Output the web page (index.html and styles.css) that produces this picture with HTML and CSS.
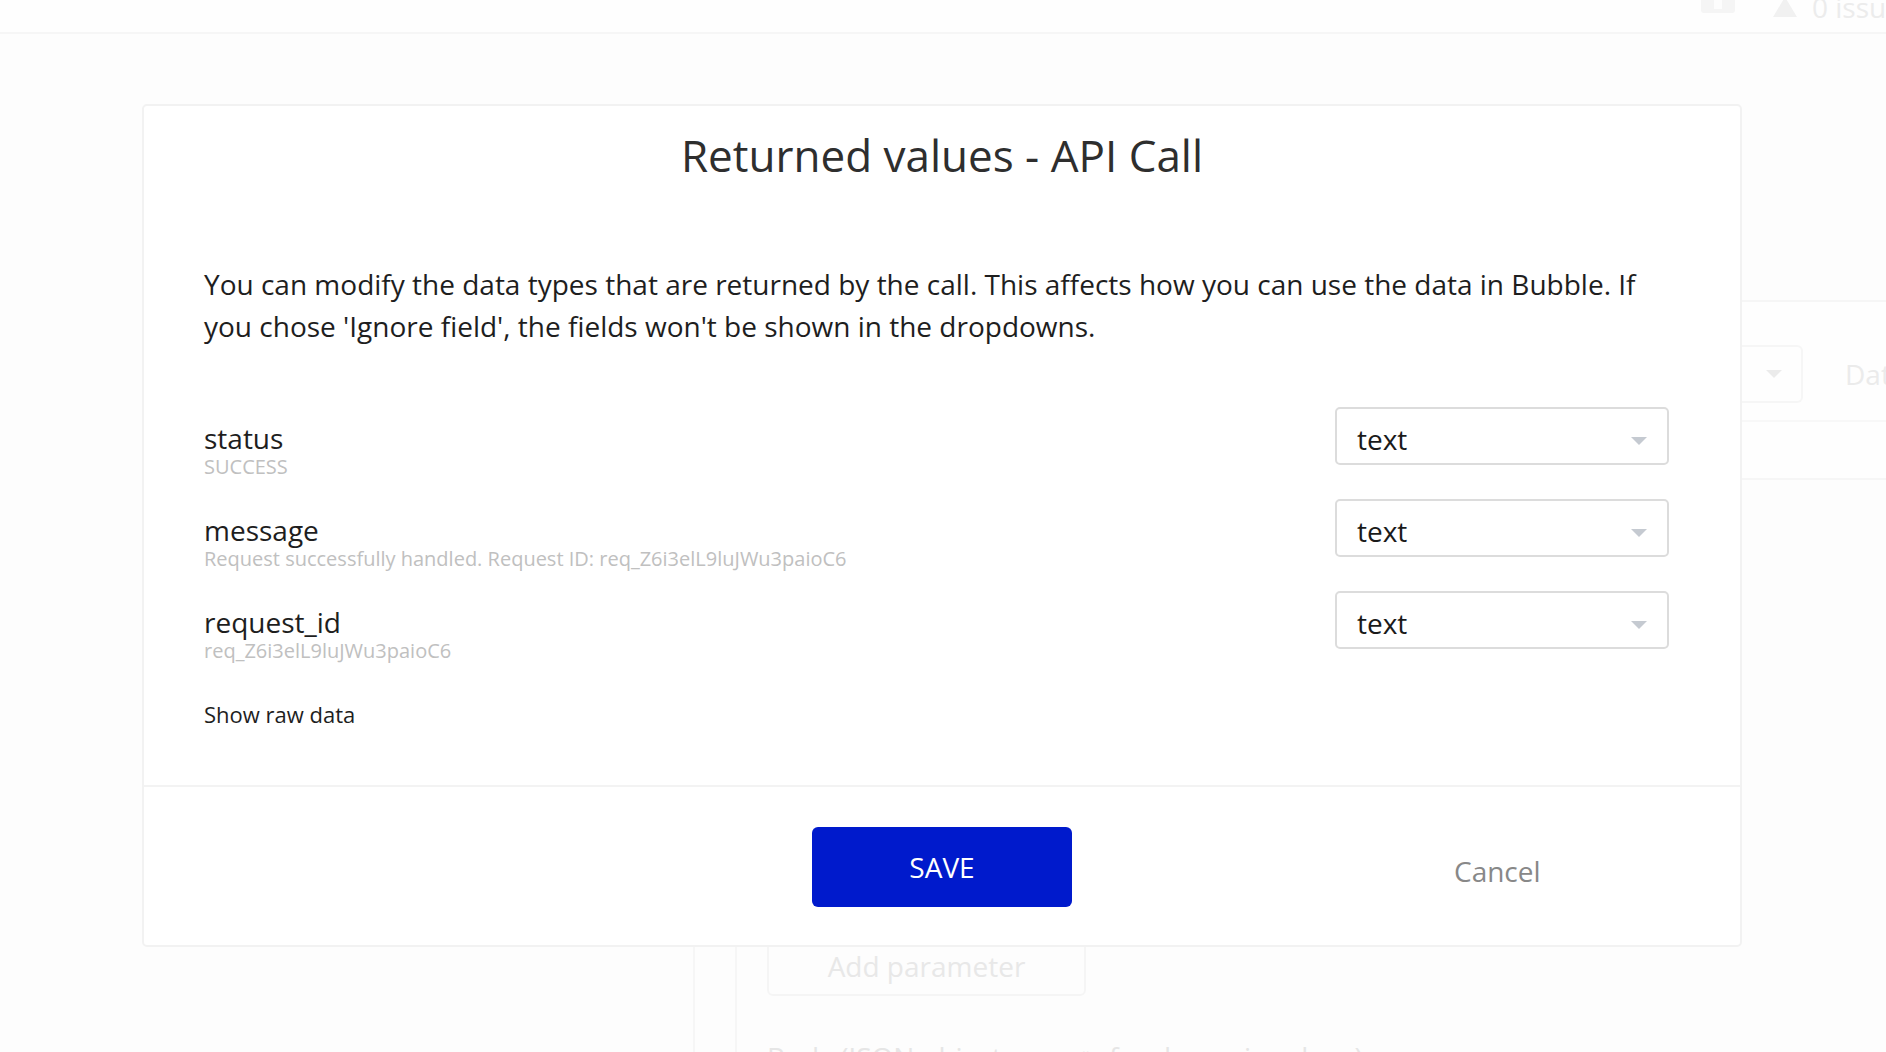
FILE: index.html
```html
<!DOCTYPE html>
<html lang="en">
<head>
<meta charset="utf-8">
<title>Returned values - API Call</title>
<link rel="stylesheet" href="styles.css">
</head>
<body>
<div class="editor">
  <header class="topbar">
    <div class="tb-box"><span class="tb-box-inner"></span></div>
    <svg class="tb-warn" width="24" height="20" viewBox="0 0 24 20"><path d="M12 0 L24 20 L0 20 Z" fill="#f1f1f1"/></svg>
    <span class="tb-issues">0 issues</span>
  </header>
  <div class="canvas">
    <div class="gutter"></div>
    <div class="col1"></div>
    <div class="col2">
      <div class="addparam">Add parameter</div>
      <div class="bodytext">Body (JSON object, use &lt;&gt; for dynamic values)</div>
    </div>
    <div class="rpanel">
      <div class="rp-row">
        <div class="rp-drop"><span class="rp-arrow"></span></div>
        <span class="rp-label">Data type</span>
      </div>
      <div class="rp-line"></div>
    </div>
  </div>
</div>

<div class="modal">
  <h1 class="modal-title">Returned values - API Call</h1>
  <div class="modal-body">
    <p class="intro">You can modify the data types that are returned by the call. This affects how you can use the data in Bubble. If you chose 'Ignore field', the fields won't be shown in the dropdowns.</p>
    <div class="fields">
      <div class="field-row">
        <div class="field-info">
          <div class="field-name">status</div>
          <div class="field-value">SUCCESS</div>
        </div>
        <div class="select"><span class="select-text">text</span><span class="caret"></span></div>
      </div>
      <div class="field-row">
        <div class="field-info">
          <div class="field-name">message</div>
          <div class="field-value">Request successfully handled. Request ID: req_Z6i3elL9luJWu3paioC6</div>
        </div>
        <div class="select"><span class="select-text">text</span><span class="caret"></span></div>
      </div>
      <div class="field-row">
        <div class="field-info">
          <div class="field-name">request_id</div>
          <div class="field-value">req_Z6i3elL9luJWu3paioC6</div>
        </div>
        <div class="select"><span class="select-text">text</span><span class="caret"></span></div>
      </div>
    </div>
    <div class="raw-link">Show raw data</div>
  </div>
  <div class="modal-footer">
    <div></div>
    <button class="btn-save">SAVE</button>
    <div class="cancel-cell"><span class="btn-cancel">Cancel</span></div>
  </div>
</div>
</body>
</html>
```

FILE: styles.css
```css
* { box-sizing: border-box; }

html, body {
  margin: 0;
  padding: 0;
}

body {
  width: 1886px;
  height: 1052px;
  overflow: hidden;
  background: #fdfdfd;
  font-family: "Open Sans", "Liberation Sans", sans-serif;
  position: relative;
}

/* ---------- faded editor behind the modal ---------- */
.editor {
  height: 1052px;
  overflow: hidden;
}

.topbar {
  height: 34px;
  background: #fefefe;
  border-bottom: 2px solid #f6f6f6;
  display: flex;
  align-items: flex-start;
  overflow: hidden;
  padding-left: 1701px;
  white-space: nowrap;
}

.topbar > * { flex: none; }

.tb-box {
  width: 34px;
  height: 24px;
  margin-top: -11px;
  background: #f5f5f5;
  border-radius: 3px;
  display: flex;
  justify-content: center;
  align-items: flex-end;
  padding-bottom: 4px;
}

.tb-box-inner {
  width: 8px;
  height: 10px;
  background: #fdfdfd;
}

.tb-warn {
  margin-left: 38px;
  margin-top: -3px;
}

.tb-issues {
  margin-left: 15px;
  margin-top: -12px;
  font-size: 28px;
  line-height: 38px;
  color: #ececec;
}

.canvas {
  display: flex;
  align-items: flex-start;
  height: 1018px;
}

.canvas > * { flex: none; }

.gutter {
  width: 693px;
}

.col1 {
  width: 42px;
  margin-top: 600px;
  height: 418px;
  border-left: 2px solid #f6f6f6;
}

.col2 {
  width: 1006px;
  margin-top: 600px;
  height: 418px;
  border-left: 2px solid #f6f6f6;
  display: flex;
  flex-direction: column;
}

.col2 > * { flex: none; }

.rpanel {
  width: 145px;
  margin-top: 266px;
  height: 180px;
  border-top: 2px solid #f6f6f6;
  border-bottom: 2px solid #f6f6f6;
  background: #fefefe;
}

.rp-row {
  display: flex;
  align-items: center;
  margin-top: 43px;
  white-space: nowrap;
}

.rp-drop {
  width: 62px;
  height: 58px;
  flex: none;
  border: 2px solid #f6f6f6;
  border-left: none;
  border-radius: 0 6px 6px 0;
  display: flex;
  align-items: center;
  padding-left: 25px;
}

.rp-arrow {
  width: 0;
  height: 0;
  border-left: 8px solid transparent;
  border-right: 8px solid transparent;
  border-top: 8px solid #ebebeb;
}

.rp-label {
  margin-left: 42px;
  font-size: 28px;
  color: #ebebeb;
}

.rp-line {
  margin-top: 17px;
  border-top: 2px solid #f8f8f8;
}

.addparam {
  margin-left: 30px;
  margin-top: 302px;
  width: 319px;
  height: 60px;
  border: 2px solid #f5f5f5;
  border-radius: 6px;
  padding-top: 9px;
  text-align: center;
  font-size: 28px;
  line-height: 38px;
  color: #e8e8e8;
  background: #fdfdfd;
}

.bodytext {
  margin-left: 30px;
  margin-top: 42px;
  font-size: 28px;
  line-height: 38px;
  color: #e6e6e6;
  white-space: nowrap;
}

/* ---------- modal ---------- */
.modal {
  position: absolute;
  top: 104px;
  left: 142px;
  width: 1600px;
  background: #ffffff;
  border: 2px solid #f2f2f2;
  border-radius: 5px;
}

.modal-title {
  margin: 0;
  padding-top: 19px;
  font-size: 44px;
  line-height: 60px;
  font-weight: 400;
  text-align: center;
  color: #2e2e2e;
}

.modal-body {
  padding: 0 71px 56px 60px;
}

.intro {
  margin: 78px 0 0 0;
  font-size: 28px;
  line-height: 42px;
  color: #1e1e1e;
  max-width: 1460px;
}

.fields {
  margin-top: 60px;
  display: flex;
  flex-direction: column;
  gap: 20px;
}

.field-row {
  display: flex;
  justify-content: space-between;
  align-items: flex-start;
  height: 72px;
}

.field-info {
  padding-top: 15px;
}

.field-name {
  font-size: 28px;
  line-height: 32px;
  color: #1e1e1e;
}

.field-value {
  font-size: 20px;
  line-height: 25px;
  color: #c0c0c0;
  white-space: nowrap;
}

.select {
  width: 334px;
  height: 58px;
  border: 2px solid #dcdcdc;
  border-radius: 5px;
  display: flex;
  align-items: flex-start;
  justify-content: space-between;
  padding: 5px 20px 0 20px;
}

.select-text {
  font-size: 28px;
  line-height: 50px;
  color: #1a1a1a;
}

.caret {
  width: 0;
  height: 0;
  margin-top: 23px;
  border-left: 8px solid transparent;
  border-right: 8px solid transparent;
  border-top: 8px solid #c5cad1;
}

.raw-link {
  margin-top: 36px;
  font-size: 22px;
  line-height: 30px;
  color: #1e1e1e;
}

.modal-footer {
  border-top: 2px solid #f3f3f3;
  padding: 40px 0 38px 0;
  display: grid;
  grid-template-columns: 1fr 260px 1fr;
  align-items: start;
}

.btn-save {
  width: 260px;
  height: 80px;
  border: none;
  border-radius: 6px;
  background: #001acc;
  color: #ffffff;
  font-family: "Open Sans", "Liberation Sans", sans-serif;
  font-size: 28px;
  line-height: 80px;
  padding: 0;
  cursor: pointer;
}

.cancel-cell {
  padding-left: 382px;
}

.btn-cancel {
  display: inline-block;
  margin-top: 9px;
  font-size: 28px;
  line-height: 70px;
  color: #888888;
  white-space: nowrap;
}
```
